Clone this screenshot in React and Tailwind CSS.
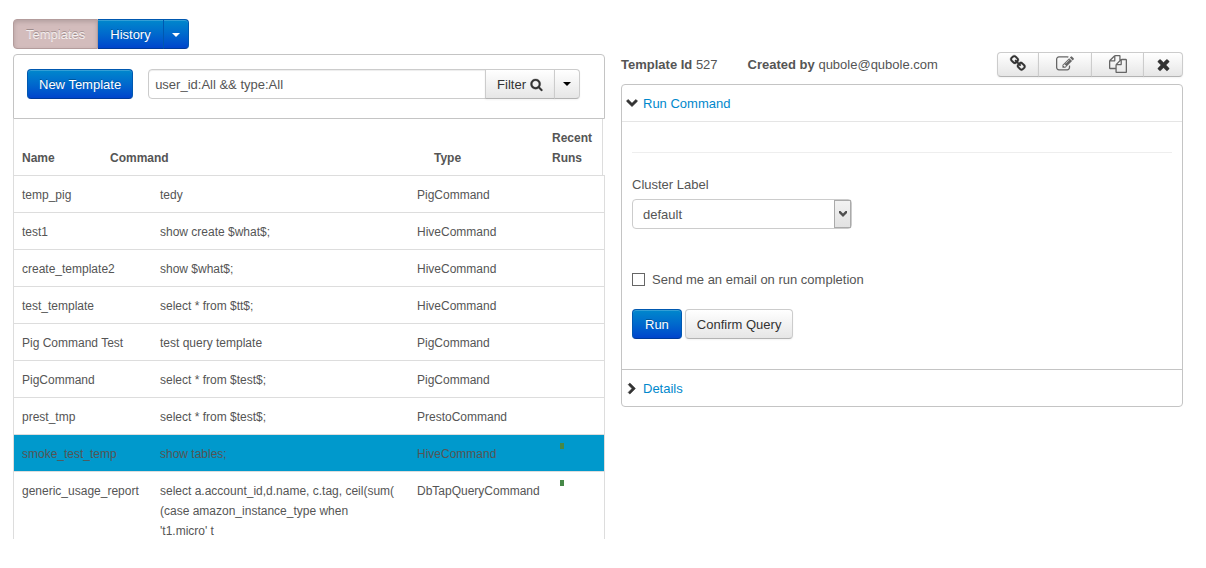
import clsx from "clsx";

const icons = {
  link: "M1456 1216q0-40-28-68l-208-208q-28-28-68-28-42 0-72 32 3 3 19 18.5t21.5 21.5 15 19 13 25.5 3.5 27.5q0 40-28 68t-68 28q-15 0-27.5-3.5t-25.5-13-19-15-21.5-21.5-18.5-19q-33 31-33 73 0 40 28 68l206 207q27 27 68 27 40 0 68-26l147-146q28-28 28-67zm-703-705q0-40-28-68l-206-207q-28-28-68-28-39 0-68 27l-147 146q-28 28-28 67 0 40 28 68l208 208q27 27 68 27 42 0 72-31-3-3-19-18.5t-21.5-21.5-15-19-13-25.5-3.5-27.5q0-40 28-68t68-28q15 0 27.5 3.5t25.5 13 19 15 21.5 21.5 18.5 19q33-31 33-73zm895 705q0 120-85 203l-147 146q-83 83-203 83-121 0-204-85l-206-207q-83-83-83-203 0-123 88-209l-88-88q-86 88-208 88-120 0-204-84l-208-208q-84-84-84-204t85-203l147-146q83-83 203-83 121 0 204 85l206 207q83 83 83 203 0 123-88 209l88 88q86-88 208-88 120 0 204 84l208 208q84 84 84 204z",
  edit: "M888 1184l116-116-152-152-116 116v56h96v96h56zm440-720q-16-16-33 1l-350 350q-17 17-1 33t33-1l350-350q17-17 1-33zm80 594v190q0 119-84.5 203.5t-203.5 84.5h-832q-119 0-203.5-84.5t-84.5-203.5v-832q0-119 84.5-203.5t203.5-84.5h832q63 0 117 25 15 7 18 23 3 17-9 29l-49 49q-14 14-32 8-23-6-45-6h-832q-66 0-113 47t-47 113v832q0 66 47 113t113 47h832q66 0 113-47t47-113v-126q0-13 9-22l64-64q15-15 35-7t20 29zm-96-738l288 288-672 672h-288v-288zm444 132l-92 92-288-288 92-92q28-28 68-28t68 28l152 152q28 28 28 68t-28 68z",
  files:
    "M1696 384q40 0 68 28t28 68v1216q0 40-28 68t-68 28h-960q-40 0-68-28t-28-68v-288h-544q-40 0-68-28t-28-68v-672q0-40 20-88t48-76l408-408q28-28 76-48t88-20h416q40 0 68 28t28 68v328q68-40 128-40h416zm-544 213l-299 299h299v-299zm-640-384l-299 299h299v-299zm196 647l316-316v-416h-384v416q0 40-28 68t-68 28h-416v640h512v-256q0-40 20-88t48-76zm956 804v-1152h-384v416q0 40-28 68t-68 28h-416v640h896z",
  times:
    "M1490 1322q0 40-28 68l-136 136q-28 28-68 28t-68-28l-294-294-294 294q-28 28-68 28t-68-28l-136-136q-28-28-28-68t28-68l294-294-294-294q-28-28-28-68t28-68l136-136q28-28 68-28t68 28l294 294 294-294q28-28 68-28t68 28l136 136q28 28 28 68t-28 68l-294 294 294 294q28 28 28 68z",
  search:
    "M1216 832q0-185-131.5-316.5t-316.5-131.5-316.5 131.5-131.5 316.5 131.5 316.5 316.5 131.5 316.5-131.5 131.5-316.5zm512 832q0 52-38 90t-90 38q-54 0-90-38l-343-342q-179 124-399 124-143 0-273.5-55.5t-225-150-150-225-55.5-273.5 55.5-273.5 150-225 225-150 273.5-55.5 273.5 55.5 225 150 150 225 55.5 273.5q0 220-124 399l343 343q37 37 37 90z",
  down: "M1683 808l-742 741q-19 19-45 19t-45-19l-742-741q-19-19-19-45.5t19-45.5l166-165q19-19 45-19t45 19l531 531 531-531q19-19 45-19t45 19l166 165q19 19 19 45.5t-19 45.5z",
  right:
    "M1363 877l-742 742q-19 19-45 19t-45-19l-166-166q-19-19-19-45t19-45l531-531-531-531q-19-19-19-45t19-45l166-166q19-19 45-19t45 19l742 742q19 19 19 45t-19 45z",
};

const templates = [
  { name: "temp_pig", command: "tedy", type: "PigCommand" },
  { name: "test1", command: "show create $what$;", type: "HiveCommand" },
  { name: "create_template2", command: "show $what$;", type: "HiveCommand" },
  { name: "test_template", command: "select * from $tt$;", type: "HiveCommand" },
  { name: "Pig Command Test", command: "test query template", type: "PigCommand" },
  { name: "PigCommand", command: "select * from $test$;", type: "PigCommand" },
  { name: "prest_tmp", command: "select * from $test$;", type: "PrestoCommand" },
  {
    name: "smoke_test_temp",
    command: "show tables;",
    type: "HiveCommand",
    recent: true,
    selected: true,
  },
  {
    name: "generic_usage_report",
    command:
      "select a.account_id,d.name, c.tag, ceil(sum( (case amazon_instance_type when 't1.micro' t",
    type: "DbTapQueryCommand",
    recent: true,
  },
];

const primary =
  "h-[30px] border border-[#0058b0] border-b-[#003a99] bg-linear-to-b from-[#0088cc] to-[#0044cc] pt-px text-white text-shadow-[0_-1px_0_rgba(0,0,0,0.25)] shadow-[inset_0_1px_0_rgba(255,255,255,0.2)]";
const plain =
  "flex items-center justify-center border border-[#ccc] border-b-[#b3b3b3] bg-linear-to-b from-white to-[#e6e6e6] text-[#333] shadow-[0_1px_2px_rgba(0,0,0,0.05)]";

function Icon({ name, stroke = 0, className }) {
  return (
    <svg
      viewBox="0 0 1792 1792"
      fill="currentColor"
      stroke="currentColor"
      strokeWidth={stroke}
      className={clsx("overflow-visible", className)}
      aria-hidden="true"
    >
      <path d={icons[name]} />
    </svg>
  );
}

function Caret() {
  return (
    <svg viewBox="0 0 8 4" fill="currentColor" className="h-1 w-2" aria-hidden="true">
      <path d="M0 0h8L4 4z" />
    </svg>
  );
}

function TemplateTable() {
  return (
    <table className="block max-h-[420px] w-full overflow-hidden text-xs leading-5">
      <thead className="mr-[2px] block border-x border-[#ddd]">
        <tr className="grid grid-cols-[88fr_324fr_118fr_50fr] items-end pt-[9px] pb-[7px] pl-2 text-left">
          <th>Name</th>
          <th>Command</th>
          <th>Type</th>
          <th>
            Recent
            <br />
            Runs
          </th>
        </tr>
      </thead>
      <tbody className="block border-x border-[#ddd]">
        {templates.map(({ name, command, type, recent, selected }) => (
          <tr
            key={name}
            className={clsx(
              "grid grid-cols-[138fr_257fr_143fr_52fr] border-t border-[#ddd] pt-2 pb-[7px]",
              selected && "bg-[#0099cc]"
            )}
          >
            <td className="pt-px pl-2">{name}</td>
            <td className="pt-px pr-3 pl-2">{command}</td>
            <td className="pt-px pl-2">{type}</td>
            <td className="pl-2">
              {recent && <span className="block h-[6px] w-1 bg-[#468847]" />}
            </td>
          </tr>
        ))}
      </tbody>
    </table>
  );
}

function TemplateList() {
  return (
    <section>
      <div className="flex">
        <button className="h-[30px] rounded-l border border-[#b39c9c] bg-[#d3bcbc] px-3 pt-px text-white/80 shadow-[inset_0_2px_4px_rgba(0,0,0,0.15)] text-shadow-[0_-1px_0_rgba(0,0,0,0.25)]">
          Templates
        </button>
        <button className={clsx(primary, "border-l-0 px-3")}>History</button>
        <button
          aria-label="More history"
          className={clsx(primary, "flex items-center rounded-r border-l-0 px-2")}
        >
          <Caret />
        </button>
      </div>

      <div className="mt-[5px] flex rounded-t border border-[#c4c4c4] pt-[14px] pr-6 pb-[19px] pl-[13px]">
        <button className={clsx(primary, "mr-[15px] rounded px-[11px]")}>New Template</button>
        <input
          type="text"
          aria-label="Filter templates"
          defaultValue="user_id:All && type:All"
          className="h-[30px] min-w-0 flex-1 rounded-l border border-[#ccc] px-[6px] shadow-[inset_0_1px_1px_rgba(0,0,0,0.075)]"
        />
        <button className={clsx(plain, "-ml-px h-[30px] gap-1 px-[11px] pt-px")}>
          Filter
          <Icon name="search" stroke={40} className="h-[13px] w-[13px]" />
        </button>
        <button
          aria-label="Filter options"
          className={clsx(plain, "-ml-px h-[30px] rounded-r px-2 text-black")}
        >
          <Caret />
        </button>
      </div>

      <TemplateTable />
    </section>
  );
}

function TemplateDetails() {
  return (
    <section className="pt-[33px]">
      <div className="flex items-start">
        <p className="mr-[30px] pt-[3px]">
          <b>Template Id</b> 527
        </p>
        <p className="pt-[3px]">
          <b>Created by</b> qubole@qubole.com
        </p>
        <div className="ml-auto flex h-[25px]">
          <button aria-label="Link" className={clsx(plain, "w-[42px] rounded-l pb-[2px]")}>
            <Icon name="link" stroke={30} className="h-[17px] w-[17px]" />
          </button>
          <button aria-label="Edit" className={clsx(plain, "-ml-px w-[54px] pb-[2px] text-[#666]")}>
            <Icon name="edit" className="h-[18px] w-[18px]" />
          </button>
          <button aria-label="Copy" className={clsx(plain, "-ml-px w-[53px] pb-[2px] text-[#666]")}>
            <Icon name="files" className="h-[18px] w-[18px]" />
          </button>
          <button aria-label="Close" className={clsx(plain, "-ml-px w-10 rounded-r")}>
            <Icon name="times" stroke={40} className="h-[17px] w-[17px]" />
          </button>
        </div>
      </div>

      <div className="mt-[7px] rounded border border-[#c4c4c4]">
        <h2 className="flex items-center gap-[5px] border-b border-[#e5e5e5] px-1 pt-[9px] pb-[7px]">
          <Icon name="down" stroke={90} className="-mt-1 h-3 w-3 text-[#333]" />
          <a href="#run" className="text-[#0088cc]">
            Run Command
          </a>
        </h2>

        <form className="px-[10px] pt-[30px] pb-[30px]" onSubmit={(e) => e.preventDefault()}>
          <hr className="mb-[22px] border-[#eee]" />
          <label htmlFor="cluster" className="block">
            Cluster Label
          </label>
          <div className="relative mt-1 w-[220px]">
            <select
              id="cluster"
              className="block h-[30px] w-full appearance-none rounded border border-[#ccc] bg-white px-[10px] pt-px"
            >
              <option>default</option>
            </select>
            <span className="pointer-events-none absolute inset-y-px right-px flex w-[17px] items-center justify-center border border-[#aaa] bg-linear-to-b from-[#f2f2f2] to-[#e2e2e2]">
              <svg viewBox="0 0 8 6" className="h-[6px] w-2" fill="#505050" aria-hidden="true">
                <path d="M0 0h1.5L4 2.5 6.5 0H8v2L4 6 0 2z" />
              </svg>
            </span>
          </div>

          <div className="mt-10 flex items-center gap-[7px]">
            <input
              id="notify"
              type="checkbox"
              className="h-[13px] w-[13px] appearance-none border border-[#666] bg-white checked:bg-[#0088cc]"
            />
            <label htmlFor="notify" className="pt-px">
              Send me an email on run completion
            </label>
          </div>

          <div className="mt-[19px] flex gap-[3px]">
            <button className={clsx(primary, "rounded px-3")}>Run</button>
            <button className={clsx(plain, "h-[30px] rounded px-[11px] pt-px")}>Confirm Query</button>
          </div>
        </form>

        <h2 className="flex items-center gap-[5px] border-t border-[#c4c4c4] px-1 pt-[9px] pb-[7px]">
          <Icon name="right" stroke={90} className="h-3 w-3 text-[#333]" />
          <a href="#details" className="text-[#0088cc]">
            Details
          </a>
        </h2>
      </div>
    </section>
  );
}

export default function App() {
  return (
    <main className="grid grid-cols-[592fr_562fr] gap-4 bg-white pt-[19px] pr-[23px] pl-[13px] font-['Liberation_Sans',Arial,sans-serif] text-[13px] leading-5 text-[#555]">
      <TemplateList />
      <TemplateDetails />
    </main>
  );
}
